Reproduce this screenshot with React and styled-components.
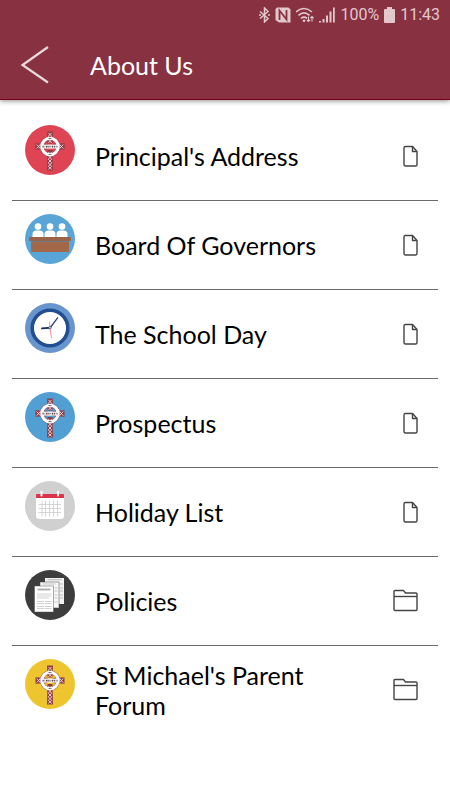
import React from 'react';
import styled, { createGlobalStyle } from 'styled-components';

const GlobalStyle = createGlobalStyle`
    body {
        margin: 0;
        background: #fff;
        color: #000;
        font-family: Lato, "Liberation Sans", sans-serif;
    }
`;

const Header = styled.header`
    background: #883141;
    border-bottom: 1px solid #74001c;
    box-shadow: 0 1px 5px rgba(0, 0, 0, 0.45);
`;

const StatusBar = styled.div`
    display: flex;
    align-items: center;
    justify-content: flex-end;
    gap: 5px;
    height: 30px;
    padding: 0 10px;
    color: #e2c8cd;
    font-family: Roboto, sans-serif;
    font-size: 16px;
    line-height: 30px;
`;

const Toolbar = styled.div`
    display: flex;
    align-items: center;
    gap: 40px;
    height: 69px;
    padding: 0 20px;
`;

const BackButton = styled.button`
    display: flex;
    padding: 0;
    border: 0;
    background: none;
    cursor: pointer;
`;

const Title = styled.h1`
    margin: 0;
    color: #fff;
    font-size: 25px;
    font-weight: 400;
    line-height: 30px;
`;

const Menu = styled.ul`
    margin: 0;
    padding: 12px;
    list-style: none;
`;

const MenuItem = styled.li`
    border-bottom: 1px solid #6a6a6a;

    &:last-child {
        border-bottom: 0;
    }
`;

const MenuLink = styled.a`
    display: flex;
    align-items: center;
    gap: 20px;
    min-height: 88px;
    padding: 0 13px;
    color: inherit;
    text-decoration: none;
`;

const Badge = styled.svg`
    flex: none;
    align-self: flex-start;
    width: 50px;
    height: 50px;
    margin-top: 13px;
`;

const Label = styled.span`
    flex: 1;
    max-width: 280px;
    font-size: 25px;
    line-height: 30px;
`;

const TypeIcon = styled.svg`
    flex: none;
    width: 38px;
    height: 28px;
    margin-left: auto;
    fill: none;
    stroke: #444;
    stroke-width: 1.4;
    stroke-linejoin: round;
`;

function Cross({ color }) {
    return (
        <Badge viewBox="0 0 50 50" aria-hidden="true">
            <circle cx="25" cy="25" r="25" fill={color} />
            <circle cx="25" cy="21.5" r="8.2" fill="none" stroke="#8c3a42" strokeWidth="3.8" />
            <g fill="#8e3a44">
                <path d="M22 6.5h6l-.6 12h-4.8z" />
                <path d="M22.5 25h5l.5 20.5h-6z" />
                <path d="M10.5 18.2l12 .8v5l-12 .8zM39.5 18.2l-12 .8v5l12 .8z" />
            </g>
            <circle cx="25" cy="21.5" r="8.2" fill="none" stroke="#fff" strokeWidth="3.1" />
            {/* knotwork on the four arms */}
            <g fill="none" stroke="#f3dfe1" strokeWidth=".9">
                <path d="M23.3 7.8l3.4 3.4-3.4 3.4 3.4 3.4M26.7 7.8l-3.4 3.4 3.4 3.4-3.4 3.4" />
                <path d="M23.3 27l3.4 3.6-3.4 3.6 3.4 3.6-3.4 3.6 3.4 3M26.7 27l-3.4 3.6 3.4 3.6-3.4 3.6 3.4 3.6-3.4 3" />
                <path d="M11.7 19.5l3.6 4 3-4M11.7 23.7l3.6-4.2 3 4.2M38.3 19.5l-3.6 4-3-4M38.3 23.7l-3.6-4.2-3 4.2" />
            </g>
            <path d="M16 19.6h18v4H16z" fill="#fff" />
            <path d="M17.5 21.6h15.5" stroke="#5c4549" strokeWidth="1.7" strokeDasharray="1.2 .9 .5 .8 1.7 .7" />
            <path d="M22.5 12.2h5v2.6h-5zM22.5 28.2h5v2.6h-5z" fill="#fff" />
            <path d="M23.5 13.6h3M23.5 29.4h3" stroke="#402b30" strokeWidth=".7" />
        </Badge>
    );
}

function Governors() {
    return (
        <Badge viewBox="0 0 50 50" aria-hidden="true">
            <circle cx="25" cy="25" r="25" fill="#5aa5d8" />
            {[13, 25, 37].map(x => (
                <g key={x} fill="#fff">
                    <circle cx={x} cy="12.6" r="3.3" />
                    <path d={`M${x - 5.5} 23.5v-3.5q0-3.5 4-3.5h3q4 0 4 3.5v3.5z`} />
                </g>
            ))}
            <rect x="6" y="28" width="38" height="10" fill="#a26849" />
            <rect x="4" y="23" width="42" height="4" rx="1" fill="#9b6348" />
            <path d="M6 27.5h38" stroke="#6f7480" strokeWidth=".8" />
        </Badge>
    );
}

function Clock() {
    return (
        <Badge viewBox="0 0 50 50" aria-hidden="true">
            <circle cx="25" cy="25" r="25" fill="#6895cd" />
            <circle cx="25" cy="25" r="17.8" fill="#fff" stroke="#214f92" strokeWidth="3.6" />
            <g strokeLinecap="round">
                <path d="M24.6 19l.4 6 1.5 10" fill="none" stroke="#f18493" strokeWidth=".9" />
                <path d="M25 25l7.6-10.2" stroke="#234775" strokeWidth="1.3" />
                <path d="M25 24.8l-8 .6" stroke="#1b315e" strokeWidth="1.9" />
            </g>
            <circle cx="25" cy="24.8" r="1.2" fill="#fff" stroke="#234775" strokeWidth=".8" />
        </Badge>
    );
}

function Calendar() {
    return (
        <Badge viewBox="0 0 50 50" aria-hidden="true">
            <circle cx="25" cy="25" r="25" fill="#d0d0d0" />
            <path d="M11 16h28v19q0 3-3 3H14q-3 0-3-3z" fill="#fff" />
            <path d="M11 17v-3q0-1 1-1h26q1 0 1 1v3z" fill="#dc354b" />
            <path d="M16.5 10.8v3.7M33 10.8v3.7" stroke="#fff" strokeWidth="2" strokeLinecap="round" />
            <path d="M13.5 23.5h22.5M13.5 27.5h22.5M13.5 31.5h22.5M17 19.5v16M20.5 19.5v16M24.5 19.5v16M28.5 19.5v16M32.5 19.5v16" stroke="#cbcbcb" strokeWidth=".8" />
        </Badge>
    );
}

function Papers() {
    return (
        <Badge viewBox="0 0 50 50" aria-hidden="true">
            <circle cx="25" cy="25" r="25" fill="#3d3d3e" />
            <path d="M20 8h19v26H20z" fill="#f2f2f2" />
            <path d="M22.5 9.7h14M35 14h3M35 18h3M35 21h3M35 25h3M35 28h3" stroke="#bbb" />
            <path d="M15 12h19v26H15z" fill="#f8f8f8" stroke="#444" strokeWidth=".5" />
            <path d="M17.5 14h13M29.5 18h3M29.5 21h3M29.5 25h3M29.5 28h3M29.5 32h3" stroke="#c5c5c5" />
            <path d="M9.5 16h19v26h-19z" fill="#fff" stroke="#555" strokeWidth=".5" />
            <path d="M12.5 19.5h13" stroke="#aaa" strokeWidth="1.8" />
            <path d="M12 24h14.5M12 26h14.5M12 28h12M12 31.5h7M20 31.5h6.5M12 33.5h7M20 33.5h6.5M12 36.5h7M20 36.5h6.5M12 38.5h7M20 38.5h6.5" stroke="#d2d2d2" />
        </Badge>
    );
}

function FileIcon() {
    return (
        <TypeIcon viewBox="0 0 38 28" aria-hidden="true">
            <path d="M18.5 4.5h7l4.5 5v13q0 1.500-1.500 1.500h-10q-1.500 0-1.500-1.500V6q0-1.500 1.500-1.500z" />
            <path d="M25.500 4.500v5H30" />
        </TypeIcon>
    );
}

function FolderIcon() {
    return (
        <TypeIcon viewBox="0 0 38 28" aria-hidden="true">
            <path d="M7 22.5v-18q0-1 1-1h8.500l2 2.500H29q1 0 1 1v15.500q0 1-1 1H8q-1 0-1-1z" />
            <path d="M7 9.5h23" />
        </TypeIcon>
    );
}

function StatusIcons() {
    return (
        <>
            <svg width="11" height="16" viewBox="0 0 11 16" fill="none" stroke="currentColor" strokeWidth="1.5" role="img" aria-label="Bluetooth">
                <path d="M1 4.500l8 7L5.500 15V1L9 4.500l-8 7" />
                <path d="M0 8h2M9 8h2" />
            </svg>
            <svg width="16" height="16" viewBox="0 0 16 16" role="img" aria-label="NFC">
                <path d="M2 .5h11.500l2 2V15.500H4L.5 13V2z" fill="currentColor" />
                <path d="M4.500 13V3.500l7 9V3" fill="none" stroke="#883141" strokeWidth="1.8" />
            </svg>
            <svg width="18" height="16" viewBox="1 0 18 16" fill="none" stroke="currentColor" role="img" aria-label="Wi-Fi">
                <path d="M1 5q8-7 16 0M3.500 8.300q5.500-5 11 0M6 11.300q3-2.500 6 0" strokeWidth="1.6" />
                <circle cx="9" cy="13.7" r="1.3" fill="currentColor" stroke="none" />
                <path d="M13.500 9.500v5M11.800 12.800l1.700 1.700 1.700-1.700M17 14.500V9.500M15.300 11.200L17 9.500l1.700 1.700" strokeWidth="1.1" />
            </svg>
            <svg width="16" height="16" viewBox="0 0 16 16" fill="currentColor" role="img" aria-label="Signal">
                <path d="M0 14h2v1.500H0zM3.500 12h2v3.500h-2zM7 8.500h2v7H7zM10.500 4.500h2v11h-2zM14 .5h1.800v15H14z" />
            </svg>
        </>
    );
}

const items = [
    { name: "Principal's Address", icon: <Cross color="#df4454" /> },
    { name: 'Board Of Governors', icon: <Governors /> },
    { name: 'The School Day', icon: <Clock /> },
    { name: 'Prospectus', icon: <Cross color="#529fd3" /> },
    { name: 'Holiday List', icon: <Calendar /> },
    { name: 'Policies', icon: <Papers />, folder: true },
    { name: "St Michael's Parent Forum", icon: <Cross color="#efc52f" />, folder: true },
];

function App() {
    return (
        <>
            <GlobalStyle />
            <Header>
                <StatusBar>
                    <StatusIcons />
                    <span>100%</span>
                    <svg width="11" height="16" viewBox="0 0 11 16" fill="currentColor" role="img" aria-label="Battery">
                        <path d="M3 0h5v2h2q1 0 1 1v12q0 1-1 1H1q-1 0-1-1V3q0-1 1-1h2z" />
                    </svg>
                    <span>11:43</span>
                </StatusBar>
                <Toolbar>
                    <BackButton type="button" aria-label="Back">
                        <svg width="30" height="40" viewBox="0 0 30 40" fill="none" stroke="#ead9dc" strokeWidth="2.2">
                            <path d="M28 2L2.500 20 28 37.500" />
                        </svg>
                    </BackButton>
                    <Title>About Us</Title>
                </Toolbar>
            </Header>
            <main>
                <Menu>
                    {items.map(item => (
                        <MenuItem key={item.name}>
                            <MenuLink href="#">
                                {item.icon}
                                <Label>{item.name}</Label>
                                {item.folder ? <FolderIcon /> : <FileIcon />}
                            </MenuLink>
                        </MenuItem>
                    ))}
                </Menu>
            </main>
        </>
    );
}

export default App;
